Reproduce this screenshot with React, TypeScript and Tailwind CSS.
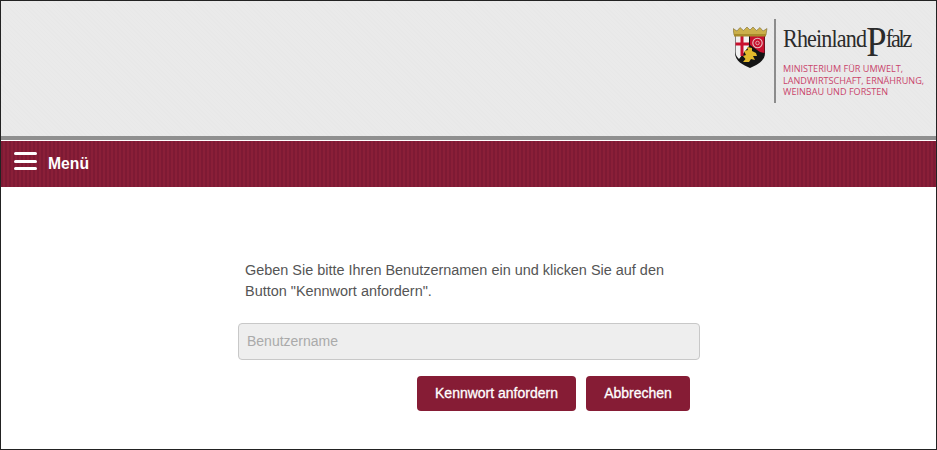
import React from 'react';

const Shield = () => (
  <svg width="36" height="44" viewBox="0 0 36 44" className="shrink-0">
    {/* shield */}
    <path d="M2 10 H32 V27 C32 35 24 39 17 42 C10 39 2 35 2 27 Z" fill="#141414" />
    {/* trier cross */}
    <path d="M2.500 10 H16 V20 L6 33 C4 31 2.500 29 2.500 26 Z" fill="#f1f1f1" />
    <rect x="7.500" y="10" width="3" height="20" fill="#c8102e" />
    <rect x="2.500" y="16.500" width="13.500" height="3" fill="#c8102e" />
    {/* red field */}
    <path d="M17 10 H31.500 V27 L27 26 L17 19 Z" fill="#c8102e" />
    <circle cx="24.500" cy="17" r="4.700" fill="none" stroke="#e6c4c4" strokeWidth="1.100" />
    <circle cx="24.500" cy="17" r="1.800" fill="none" stroke="#e6c4c4" strokeWidth="0.800" />
    {/* lion */}
    <path d="M10 36 L12.500 33 L10 30 L13 29 L11 25 L15 24 L14 21 L19 22 L19 25 L23 27 L24 30 L20 30 L22 34 L18 33 L16 36 Z" fill="#e2b92c" />
    {/* crown */}
    <path d="M1 9 L0 2.500 L4 5 L7 1.500 L10.500 4.500 L14 1 L17 4 L20 1 L23.500 4.500 L27 1.500 L30 5 L34 2.500 L33 9 Z" fill="#cbb04a" stroke="#6a5a22" strokeWidth="0.500" />
    <rect x="1" y="8" width="32" height="2.500" fill="#a88c2c" />
  </svg>
);

const App: React.FC = () => {
  return (
    <div className="h-[450px] w-[937px] border border-[#222] bg-white font-['Liberation_Sans',Arial,sans-serif] flex flex-col overflow-hidden">
      {/* header */}
      <header className="h-[135px] bg-[#e9e9e9] bg-[repeating-linear-gradient(45deg,#e8e8e8_0px,#e8e8e8_1px,#eaeaea_1px,#eaeaea_3px)] flex justify-end pt-[18px] pr-[12px]">
        <div className="flex items-start">
          <div className="pt-[7px]">
            <Shield />
          </div>
          <div className="ml-[5px] w-[2px] h-[84px] bg-[#8c8c8c]" />
          <div className="ml-[7px] w-[141px]">
            <div className="h-[40px] pt-[3px] origin-left scale-x-[.85] font-['Liberation_Serif',serif] text-[26px] leading-[34px] tracking-[-1px] text-[#2b2b2b] whitespace-nowrap">
              Rheinland<span className="relative top-[9px] text-[43px] leading-[0]">P</span><span className="tracking-[-2.500px]">falz</span>
            </div>
            <div className="mt-[4px] font-['Open_Sans',sans-serif] text-[9.100px] leading-[11.500px] text-[#c9446b] whitespace-nowrap">
              <div>MINISTERIUM FÜR UMWELT,</div>
              <div>LANDWIRTSCHAFT, ERNÄHRUNG,</div>
              <div>WEINBAU UND FORSTEN</div>
            </div>
          </div>
        </div>
      </header>
      <div className="h-[4px] bg-[#8f8f8f]" />
      <div className="h-px bg-white" />

      {/* nav */}
      <nav className="h-[46px] flex items-center pl-[13px] bg-[repeating-linear-gradient(90deg,#7e1a34_0px,#7e1a34_2px,#8a1f38_2px,#8a1f38_4px)]">
        <div className="w-[23px] flex flex-col gap-[4.500px] -mt-[6px]">
          <div className="h-[3px] rounded-sm bg-white" />
          <div className="h-[3px] rounded-sm bg-white" />
          <div className="h-[3px] rounded-sm bg-white" />
        </div>
        <span className="ml-[11px] text-white text-[15.700px] font-bold">Menü</span>
      </nav>

      {/* form */}
      <main className="flex-1 pl-[237px] pt-[73px]">
        <div className="w-[462px]">
          <p className="pl-[7px] text-[14.450px] leading-[21px] text-[#555] whitespace-nowrap">
            Geben Sie bitte Ihren Benutzernamen ein und klicken Sie auf den<br />
            Button "Kennwort anfordern".
          </p>
          <input
            type="text"
            placeholder="Benutzername"
            className="mt-[21px] w-full h-[37px] px-[8px] pb-[2px] rounded-[4px] border border-[#c8c8c8] bg-[#eeeeee] text-[14px] placeholder:text-[#aaa] outline-none"
          />
          <div className="mt-[16px] flex justify-end gap-[10px] pr-[10px]">
            <button className="w-[159px] h-[35px] rounded-[4px] bg-[#861c35] text-white text-[14px] [-webkit-text-stroke:0.3px_white]">Kennwort anfordern</button>
            <button className="w-[104px] h-[35px] rounded-[4px] bg-[#861c35] text-white text-[14px] [-webkit-text-stroke:0.3px_white]">Abbrechen</button>
          </div>
        </div>
      </main>
    </div>
  );
};

export default App;
